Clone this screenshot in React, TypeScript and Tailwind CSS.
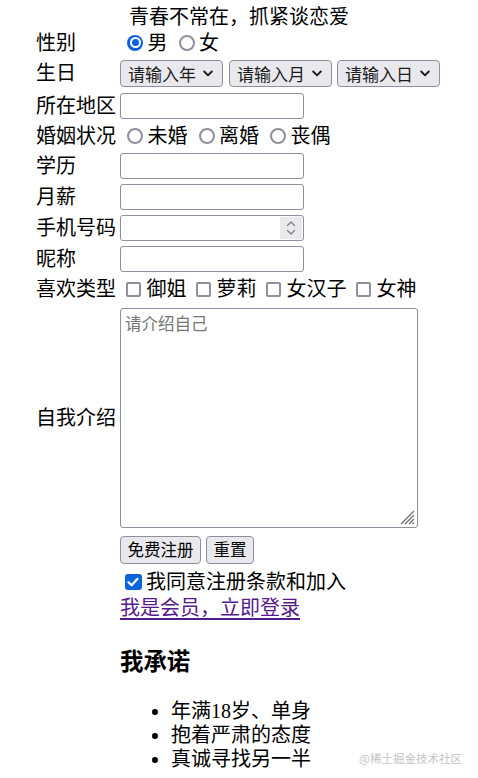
import React from "react";

const SERIF = "font-['Liberation_Serif','Noto_Sans_CJK_SC',serif]";
const SANS = "font-['Noto_Sans_CJK_SC','Liberation_Sans',sans-serif]";

function Row({ label, h, children }: { label?: string; h: string; children?: React.ReactNode }) {
  return (
    <div className={`flex items-center ${h}`}>
      <div className="w-[84px] shrink-0 whitespace-nowrap">{label}</div>
      <div className="flex items-center">{children}</div>
    </div>
  );
}

function Radio({ checked = false, text, first = false }: { checked?: boolean; text: string; first?: boolean }) {
  return (
    <span className={`flex items-center ${first ? "ml-[7px]" : "ml-[11px]"}`}>
      {checked ? (
        <span className="flex h-[16px] w-[16px] items-center justify-center rounded-full bg-[#0b63de]">
          <span className="flex h-[11px] w-[11px] items-center justify-center rounded-full bg-white">
            <span className="h-[7px] w-[7px] rounded-full bg-[#0b63de]" />
          </span>
        </span>
      ) : (
        <span className="h-[16px] w-[16px] rounded-full border-2 border-[#8f8f9d] bg-white" />
      )}
      <span className="ml-[4.5px]">{text}</span>
    </span>
  );
}

function Check({ text, first = false }: { text: string; first?: boolean }) {
  return (
    <span className={`flex items-center ${first ? "ml-[6px]" : "ml-[9.5px]"}`}>
      <span className="h-[15px] w-[15px] rounded-[2px] border-2 border-[#8f8f9d] bg-white" />
      <span className="ml-[5.5px]">{text}</span>
    </span>
  );
}

function Select({ label, ml }: { label: string; ml: string }) {
  return (
    <div
      className={`flex h-[27px] w-[103px] items-center justify-between rounded-[4px] border border-[#8f8f9d] bg-[#e9e9ed] pl-[7px] pr-[9px] text-[17px] leading-none text-[#1b1b1b] ${SANS} ${ml}`}
    >
      <span>{label}</span>
      <svg width="10" height="7" viewBox="0 0 10 7">
        <path d="M1.2 1.5 5 5.3 8.8 1.5" fill="none" stroke="#1b1b1b" strokeWidth="1.9" strokeLinecap="round" strokeLinejoin="round" />
      </svg>
    </div>
  );
}

function TextInput() {
  return (
    <input
      type="text"
      className={`h-[26px] w-[184px] rounded-[3px] border border-[#8f8f9d] bg-white px-[3px] text-[16px] outline-none ${SANS}`}
    />
  );
}

function NumberInput() {
  return (
    <div className="flex h-[26px] w-[184px] items-center rounded-[3px] border border-[#8f8f9d] bg-white p-[1px]">
      <input type="text" className={`h-full min-w-0 flex-1 px-[2px] text-[16px] outline-none ${SANS}`} />
      <div className="flex h-[22px] w-[22px] items-center justify-center bg-[#e9e9ed]">
        <svg width="12" height="18" viewBox="0 0 12 18">
          <path d="M2.5 6.5 6 3l3.5 3.5" fill="none" stroke="#808080" strokeWidth="1.3" strokeLinecap="round" strokeLinejoin="round" />
          <path d="M2.5 11.5 6 15l3.5-3.5" fill="none" stroke="#808080" strokeWidth="1.3" strokeLinecap="round" strokeLinejoin="round" />
        </svg>
      </div>
    </div>
  );
}

export default function App() {
  return (
    <div className={`relative h-[778px] w-[478px] overflow-hidden bg-white text-[20px] text-black ${SERIF}`}>
      <div className="pt-[5px]">
        <div className="flex h-[24px] items-center justify-center">青春不常在，抓紧谈恋爱</div>
      </div>
      <div className="pl-[36px]">
        <Row label="性别" h="h-[27px]">
          <Radio checked text="男" first />
          <Radio text="女" />
        </Row>
        <Row label="生日" h="h-[34px]">
          <Select label="请输入年" ml="" />
          <Select label="请输入月" ml="ml-[6px]" />
          <Select label="请输入日" ml="ml-[5px]" />
        </Row>
        <Row label="所在地区" h="h-[31px]">
          <TextInput />
        </Row>
        <Row label="婚姻状况" h="h-[29px]">
          <Radio text="未婚" first />
          <Radio text="离婚" />
          <Radio text="丧偶" />
        </Row>
        <Row label="学历" h="h-[31px]">
          <TextInput />
        </Row>
        <Row label="月薪" h="h-[31px]">
          <TextInput />
        </Row>
        <Row label="手机号码" h="h-[31px]">
          <NumberInput />
        </Row>
        <Row label="昵称" h="h-[31px]">
          <TextInput />
        </Row>
        <Row label="喜欢类型" h="h-[30px]">
          <Check text="御姐" first />
          <Check text="萝莉" />
          <Check text="女汉子" />
          <Check text="女神" />
        </Row>
        <Row label="自我介绍" h="h-[228px]">
          <div className="relative h-[220px] w-[298px]">
            <textarea
              placeholder="请介绍自己"
              className={`h-full w-full resize-none rounded-[3px] border border-[#8f8f9d] bg-white px-[4px] py-[3px] text-[16.5px] leading-[23px] outline-none placeholder:text-[#757575] ${SANS}`}
            />
            <svg className="absolute bottom-[3px] right-[3px]" width="18" height="18" viewBox="0 0 18 18">
              <path d="M17 4 4 17M17 8 8 17M17 12 12 17M17 15.5 15.5 17" stroke="#6b6b6b" strokeWidth="1.2" fill="none" />
            </svg>
          </div>
        </Row>
        <Row h="h-[35px]">
          <button
            className={`flex h-[28px] items-center rounded-[4px] border border-[#8f8f9d] bg-[#e9e9ed] px-[6.5px] text-[16.5px] leading-none text-black ${SANS}`}
          >
            免费注册
          </button>
          <button
            className={`ml-[5px] flex h-[28px] items-center rounded-[4px] border border-[#8f8f9d] bg-[#e9e9ed] px-[6.5px] text-[16.5px] leading-none text-black ${SANS}`}
          >
            重置
          </button>
        </Row>
        <Row h="h-[30px]">
          <span className="ml-[5px] flex h-[16.5px] w-[16.5px] items-center justify-center rounded-[3px] bg-[#0b63de]">
            <svg width="12" height="10" viewBox="0 0 12 10">
              <path d="M1.5 5.2 4.6 8.2 10.5 1.8" fill="none" stroke="white" strokeWidth="2.2" strokeLinecap="round" strokeLinejoin="round" />
            </svg>
          </span>
          <span className="ml-[4.5px]">我同意注册条款和加入</span>
        </Row>
        <Row h="h-[22px]">
          <a href="#" className="leading-[22px] text-[#551a8b] underline underline-offset-[3px]">
            我是会员，立即登录
          </a>
        </Row>
        <div className="pl-[84px]">
          <h3 className="mt-[30px] text-[23.4px] font-bold leading-[27px]">我承诺</h3>
          <ul className="mt-[23px] list-disc pl-[51px] leading-[24px]">
            <li>年满18岁、单身</li>
            <li>抱着严肃的态度</li>
            <li>真诚寻找另一半</li>
          </ul>
        </div>
      </div>
      <div className={`absolute bottom-[14px] right-[16px] text-[11.5px] leading-none text-[#c4c4c4] ${SANS}`}>@稀土掘金技术社区</div>
    </div>
  );
}
